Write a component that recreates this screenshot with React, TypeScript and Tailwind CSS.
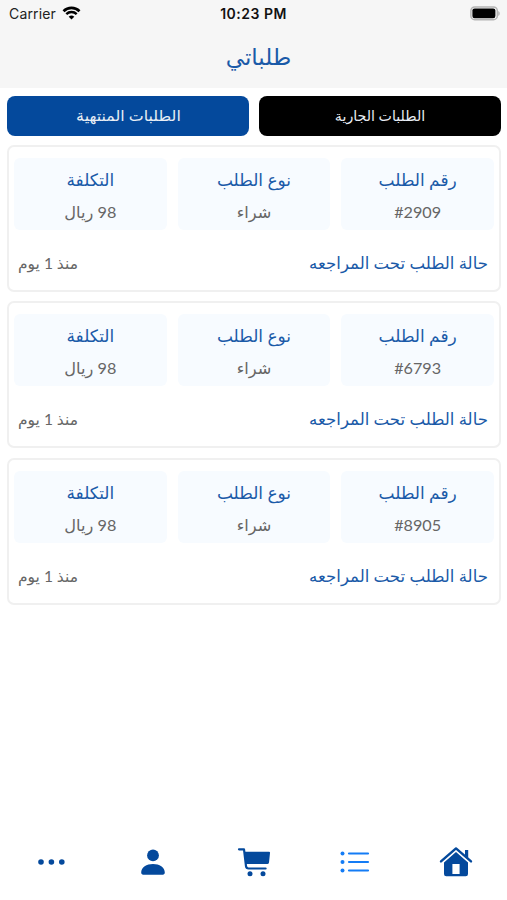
import React from "react";

type Order = { id: string; type: string; cost: string; ago: string };

const orders: Order[] = [
  { id: "#2909", type: "شراء", cost: "98 ريال", ago: "منذ 1 يوم" },
  { id: "#6793", type: "شراء", cost: "98 ريال", ago: "منذ 1 يوم" },
  { id: "#8905", type: "شراء", cost: "98 ريال", ago: "منذ 1 يوم" },
];

function StatusBar() {
  return (
    <div dir="ltr" className="grid h-[27px] grid-cols-3 items-center pl-[9px] pr-[7px] font-['Inter',sans-serif] text-black">
      <div className="flex items-center gap-[6px]">
        <span className="text-[14px] tracking-[0.15px] text-[#222]">Carrier</span>
        <svg width="19" height="14" viewBox="0 0 18 14" fill="none" className="-mt-0.5">
          <path d="M1 5.2a11.4 11.4 0 0 1 16 0" stroke="#000" strokeWidth="2.7" />
          <path d="M3.8 8.2a7.4 7.4 0 0 1 10.4 0" stroke="#000" strokeWidth="2.4" />
          <path d="M9 13.6 6.2 10.8a4 4 0 0 1 5.6 0z" fill="#000" />
        </svg>
      </div>
      <span className="-ml-[2px] text-center text-[14px] font-semibold tracking-[0.5px] text-[#111]">10:23 PM</span>
      <svg width="30" height="15" viewBox="0 0 30 15" className="justify-self-end">
        <rect x="0.9" y="0.9" width="26.4" height="12.8" rx="3.8" fill="#f6f6f6" stroke="#b4b4b4" strokeWidth="1.5" />
        <rect x="2.4" y="2.4" width="23" height="9.8" rx="2.2" fill="#000" />
        <path d="M28.3 5v5c1.8-.8 1.8-4.2 0-5z" fill="#aaa" />
      </svg>
    </div>
  );
}

function Field({ label, children }: { label: string; children: React.ReactNode }) {
  return (
    <div className="flex h-[72px] flex-1 flex-col items-center rounded-md bg-[#f7fbff] pt-[6px]">
      <span className="h-8 text-[17px] leading-8 whitespace-nowrap text-[#1a5aa8]">{label}</span>
      <span className="h-8 text-[16.2px] leading-8 whitespace-nowrap text-[#666]">{children}</span>
    </div>
  );
}

function OrderCard({ order }: { order: Order }) {
  return (
    <article className="h-[147px] rounded-[7px] border-2 border-[#f0f0f0] bg-white px-[5px] pt-[11px]">
      <div className="flex gap-[11px]">
        <Field label="رقم الطلب">
          <bdi dir="ltr">{order.id}</bdi>
        </Field>
        <Field label="نوع الطلب">{order.type}</Field>
        <Field label="التكلفة">{order.cost}</Field>
      </div>
      <div className="mt-[17.6px] flex h-8 items-center justify-between pr-[6px] pl-1">
        <span className="text-[16.6px] text-[#1a5aa8]">حالة الطلب تحت المراجعه</span>
        <span className="text-[15.5px] text-[#666]">{order.ago}</span>
      </div>
    </article>
  );
}

function HomeIcon() {
  return (
    <svg width="34" height="32" viewBox="0 0 34 32" fill="none">
      <path d="M26 4h3.2v9L26 10z" fill="#04499c" />
      <path d="m2 15.4 15-13 15 13" stroke="#04499c" strokeWidth="2.4" strokeLinecap="round" strokeLinejoin="round" />
      <path fillRule="evenodd" d="M17 6.1 29 16.6v11.4a2.3 2.3 0 0 1-2.3 2.3H7.3A2.3 2.3 0 0 1 5 28V16.6zM13.4 18v10h7.2V18z" fill="#04499c" />
    </svg>
  );
}

function ListIcon() {
  return (
    <svg width="30" height="22" viewBox="0 0 30 22" stroke="#147cf5" strokeWidth="2.2" strokeLinecap="round">
      {[2.5, 11, 19.5].map((y) => (
        <g key={y}>
          <circle cx="2.5" cy={y} r="2" fill="#147cf5" stroke="none" />
          <path d={`M9 ${y}H28`} />
        </g>
      ))}
    </svg>
  );
}

function CartIcon() {
  return (
    <svg width="34" height="30" viewBox="0 0 34 30" fill="none">
      <path d="M2 2.3h5l2 16.9q.3 2.3 2.6 2.3h17" stroke="#04499c" strokeWidth="2.2" strokeLinecap="round" strokeLinejoin="round" />
      <path d="M7.2 4.8h24.8a1 1 0 0 1 1 1.2l-1 9.5a1.8 1.8 0 0 1-1.8 1.5H8.6z" fill="#04499c" />
      <circle cx="13" cy="26.8" r="2.5" fill="#04499c" />
      <circle cx="26" cy="26.8" r="2.5" fill="#04499c" />
    </svg>
  );
}

function PersonIcon() {
  return (
    <svg width="24" height="26" viewBox="0 0 24 26" fill="#04499c">
      <circle cx="12" cy="6.4" r="5.9" />
      <path d="M.2 23.6C.2 18.2 5.6 14.9 12 14.9s11.8 3.3 11.8 8.7c0 1.3-.8 2.1-2 2.1H2.2c-1.2 0-2-.8-2-2.1z" />
    </svg>
  );
}

function MoreIcon() {
  return (
    <svg width="27" height="6" viewBox="0 0 27 6" fill="#04499c">
      <circle cx="3" cy="3" r="2.8" />
      <circle cx="13.4" cy="3" r="2.8" />
      <circle cx="23.8" cy="3" r="2.8" />
    </svg>
  );
}

export default function App() {
  return (
    <div dir="rtl" lang="ar" className="flex h-[900px] w-[507px] flex-col overflow-hidden bg-white font-['Lato','DejaVu_Sans',sans-serif]">
      <header className="h-[88px] bg-[#f6f6f6]">
        <StatusBar />
        <h1 className="pl-[10px] text-center text-[23px] leading-[58px] text-[#1a5aa8]">طلباتي</h1>
      </header>
      <main className="flex-1 pt-2 pr-[6px] pl-[7px]">
        <div className="flex gap-[10px] text-[#e8eef5]">
          <button className="h-10 flex-1 rounded-lg bg-black text-[14.2px]">الطلبات الجارية</button>
          <button className="h-10 flex-1 rounded-lg bg-[#04499c] pb-0.5 text-[14.7px]">
            <span className="inline-block scale-x-[1.08]">الطلبات المنتهية</span>
          </button>
        </div>
        <div className="mt-[9px] flex flex-col gap-[9.3px]">
          {orders.map((order) => (
            <OrderCard key={order.id} order={order} />
          ))}
        </div>
      </main>
      <nav className="mb-[5px] grid h-[66px] grid-cols-5 place-items-center pl-px">
        <HomeIcon />
        <ListIcon />
        <CartIcon />
        <PersonIcon />
        <MoreIcon />
      </nav>
    </div>
  );
}
